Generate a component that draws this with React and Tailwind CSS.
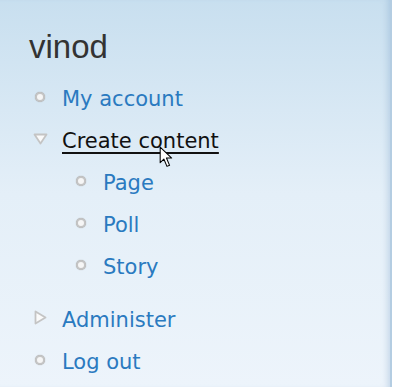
import React from 'react';

function Dot() {
  return (
    <span className="inline-block w-[10px] h-[10px] rounded-full border-2 border-[#c4c4c4] bg-[#f6f6f6] shadow-[0_0_1px_#999]" />
  );
}

function TriDown() {
  return (
    <svg width="15" height="12" viewBox="0 0 15 12">
      <path d="M1.5 1.5 L13.5 1.5 L7.5 10.5 Z" fill="#fafafa" stroke="#c4c4c4" strokeWidth="1.8" strokeLinejoin="round" />
    </svg>
  );
}

function TriRight() {
  return (
    <svg width="13" height="15" viewBox="0 0 13 15">
      <path d="M1.5 1.5 L11.5 7.5 L1.5 13.5 Z" fill="#fafafa" stroke="#c4c4c4" strokeWidth="1.8" strokeLinejoin="round" />
    </svg>
  );
}

function Item({ icon, children, active, className = '' }) {
  return (
    <div className={`flex items-center h-[42px] ${className}`}>
      <span className="w-[28px] mr-[8px] flex justify-center items-center -mt-[7px]">{icon}</span>
      <a
        className={
          active
            ? 'text-[#111] underline underline-offset-[4px] decoration-[1.5px]'
            : 'text-[#2a7ac0]'
        }
      >
        {children}
      </a>
    </div>
  );
}

export default function App() {
  return (
    <div className="flex w-[400px] h-[387px] overflow-hidden">
      <div className="relative w-[392px] h-full bg-gradient-to-b from-[#c8dfef] via-[#e4eff8] to-[#edf4fb] border-r-2 border-[#b4cde2] shadow-[inset_-6px_0_6px_-4px_rgba(120,160,200,0.35)]">
        <div className="pl-[26px] pt-[28px] font-['DejaVu_Sans',Verdana,sans-serif] text-[21px]">
          <h2 className="font-['Liberation_Sans',Arial,sans-serif] text-[33px] text-[#333] leading-[38px] ml-[3px]">
            vinod
          </h2>
          <div className="mt-[13px]">
            <Item icon={<Dot />}>My account</Item>
            <Item icon={<TriDown />} active>Create content</Item>
            <div className="pl-[41px]">
              <Item icon={<Dot />}>Page</Item>
              <Item icon={<Dot />}>Poll</Item>
              <Item icon={<Dot />}>Story</Item>
            </div>
            <Item icon={<TriRight />} className="mt-[11px]">Administer</Item>
            <Item icon={<Dot />}>Log out</Item>
          </div>
        </div>
        <svg className="absolute left-[159px] top-[146px]" width="17" height="23" viewBox="0 0 16 22">
          <path d="M1 1 L1 16 L4.5 12.5 L7.5 19.5 L10 18.5 L7 11.5 L12 11.5 Z" fill="#fff" stroke="#000" strokeWidth="1" strokeLinejoin="round" />
        </svg>
      </div>
      <div className="flex-1 bg-white" />
    </div>
  );
}
